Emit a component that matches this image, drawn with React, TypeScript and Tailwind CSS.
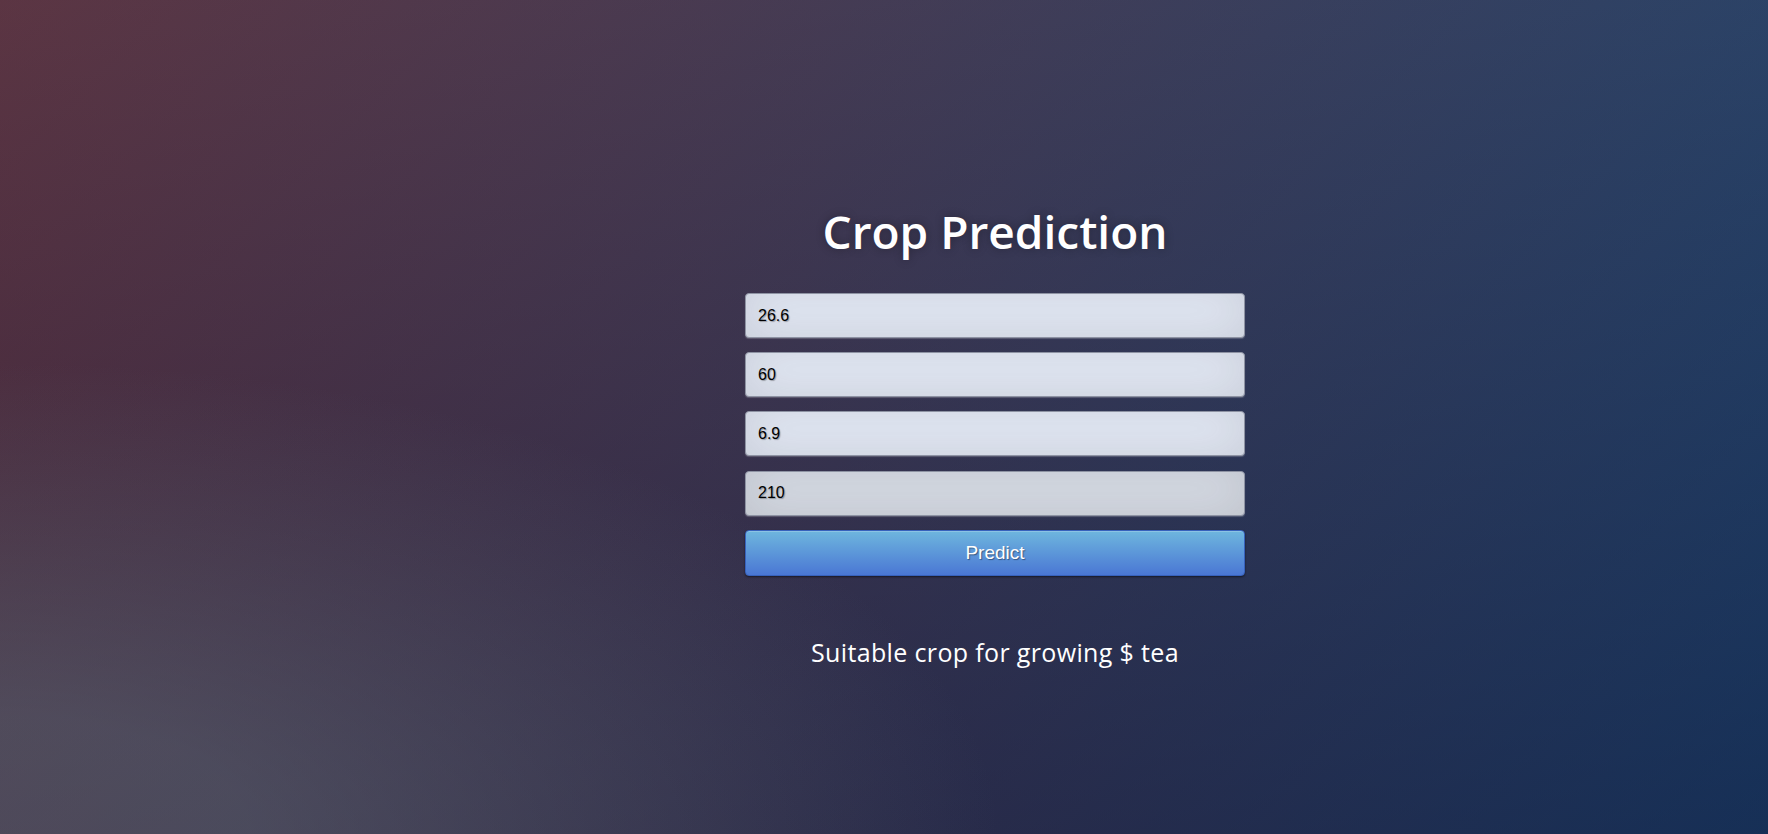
import { useState } from "react";

const fields = [
  { name: "temperature", value: "26.6", tone: "bg-[#e4eaf7]" },
  { name: "humidity", value: "60", tone: "bg-[#e4eaf7]" },
  { name: "ph", value: "6.9", tone: "bg-[#e4eaf7]" },
  { name: "rainfall", value: "210", tone: "bg-[#d7dce6]" },
];

export default function App() {
  const [values, setValues] = useState(fields.map((f) => f.value));

  return (
    <div className="h-[834px] w-full overflow-hidden [background:radial-gradient(ellipse_farthest-corner_at_0%_100%,rgba(104,128,138,.4)_10%,rgba(138,114,76,0)_40%),linear-gradient(to_bottom,rgba(57,173,219,.25)_0%,rgba(42,60,87,.4)_100%),linear-gradient(135deg,#670d10_0%,#092756_100%)]">
      <div className="flex justify-center pl-[222px] pt-[199px]">
        <div className="flex w-[500px] flex-col items-center">
          <h1 className="font-['Open_Sans',sans-serif] text-[46px] font-semibold leading-[64px] text-white [text-shadow:0_0_10px_rgba(0,0,0,0.3)]">
            Crop Prediction
          </h1>
          <form
            className="mt-[30px] flex w-full flex-col gap-[14.2px]"
            onSubmit={(e) => e.preventDefault()}
          >
            {fields.map((f, i) => (
              <input
                key={f.name}
                name={f.name}
                value={values[i]}
                onChange={(e) => {
                  const next = [...values];
                  next[i] = e.target.value;
                  setValues(next);
                }}
                className={`h-[45px] w-full rounded-[4px] border border-[#8e93a3] ${f.tone} px-[12px] font-['Liberation_Sans',Arial,sans-serif] text-[16px] text-black outline-none [text-shadow:1px_1px_1px_rgba(0,0,0,0.3)] shadow-[inset_0_-5px_45px_rgba(100,100,100,0.2),0_1px_1px_rgba(255,255,255,0.2)]`}
              />
            ))}
            <button
              type="submit"
              className="h-[46px] w-full rounded-[4px] border border-[#3762bc] bg-[linear-gradient(to_bottom,#6eb6de,#4a77d4)] font-['Liberation_Sans',Arial,sans-serif] text-[19px] text-white [text-shadow:1px_1px_1px_rgba(0,0,0,0.4)] shadow-[inset_0_1px_0_rgba(255,255,255,0.2),0_1px_2px_rgba(0,0,0,0.5)]"
            >
              Predict
            </button>
          </form>
          <p className="mt-[57px] font-['Open_Sans',sans-serif] text-[25px] leading-[38px] tracking-[0.35px] text-white">
            Suitable crop for growing $ tea
          </p>
        </div>
      </div>
    </div>
  );
}
